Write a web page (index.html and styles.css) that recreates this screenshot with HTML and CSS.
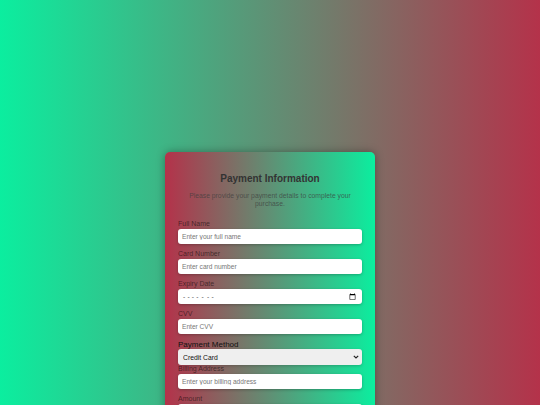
FILE: index.html
```html
<!DOCTYPE html>
<html lang="en">
<head>
<meta charset="utf-8">
<title>Payment Information</title>
<link rel="stylesheet" href="styles.css">
</head>
<body>
<main class="page">
  <form class="card">
    <h1 class="title">Payment Information</h1>
    <p class="subtitle">Please provide your payment details to complete your purchase.</p>
    <div class="group">
      <label class="label" for="name">Full Name</label>
      <input class="field" id="name" type="text" placeholder="Enter your full name">
    </div>
    <div class="group">
      <label class="label" for="card">Card Number</label>
      <input class="field" id="card" type="text" placeholder="Enter card number">
    </div>
    <div class="group">
      <label class="label" for="expiry">Expiry Date</label>
      <input class="field field-date" id="expiry" type="month">
    </div>
    <div class="group">
      <label class="label" for="cvv">CVV</label>
      <input class="field" id="cvv" type="text" placeholder="Enter CVV">
    </div>
    <label class="label-plain" for="method">Payment Method</label>
    <div class="select-wrap">
      <select class="select" id="method">
        <option>Credit Card</option>
        <option>Debit Card</option>
        <option>PayPal</option>
      </select>
      <svg class="chevron" width="6" height="4" viewBox="0 0 6 4" aria-hidden="true">
        <path d="M0.8 0.8 L3 3 L5.2 0.8" fill="none" stroke="#222" stroke-width="1.2"/>
      </svg>
    </div>
    <div class="group">
      <label class="label" for="billing">Billing Address</label>
      <input class="field" id="billing" type="text" placeholder="Enter your billing address">
    </div>
    <div class="group">
      <label class="label" for="amount">Amount</label>
      <input class="field" id="amount" type="text" placeholder="Enter amount">
    </div>
  </form>
</main>
</body>
</html>
```
FILE: styles.css
```css
html, body {
  margin: 0;
  padding: 0;
}
body {
  font-family: "Liberation Sans", Arial, sans-serif;
  background: linear-gradient(to right, #0bee9f, #b4324a);
  min-height: 405px;
  overflow: hidden;
}
.page {
  display: flex;
  justify-content: center;
  padding-top: 152px;
}
.card {
  width: 210px;
  box-sizing: border-box;
  padding: 12px 13px 20px;
  border-radius: 5px;
  background: linear-gradient(to right, #b4324a, #0bee9f);
  box-shadow: 0 0 8px rgba(0, 0, 0, 0.35);
  display: flex;
  flex-direction: column;
}
.title {
  margin: 8px 0 0;
  font-size: 10px;
  line-height: 13px;
  font-weight: bold;
  text-align: center;
  color: #333;
}
.subtitle {
  margin: 7px 0 12px;
  font-size: 6.8px;
  line-height: 8px;
  text-align: center;
  color: rgba(60, 60, 60, 0.72);
}
.group {
  display: flex;
  flex-direction: column;
  margin-bottom: 6px;
}
.label {
  font-size: 7px;
  line-height: 8px;
  margin-bottom: 1px;
  color: rgba(0, 0, 0, 0.55);
}
.label-plain {
  font-size: 8px;
  line-height: 9px;
  color: #111;
}
.field {
  box-sizing: border-box;
  display: block;
  width: 100%;
  height: 15px;
  margin: 0;
  padding: 0 4px;
  border: none;
  border-radius: 3px;
  background: #fff;
  box-shadow: 0 1px 3px rgba(0, 0, 0, 0.25);
  font-family: "Liberation Sans", Arial, sans-serif;
  font-size: 6.6px;
  color: #333;
  outline: none;
}
.field-date {
  color: #555;
  letter-spacing: 2.2px;
}
.field::placeholder {
  color: #777;
}
.select-wrap {
  position: relative;
  height: 16px;
}
.select {
  box-sizing: border-box;
  display: block;
  width: 100%;
  height: 16px;
  margin: 0;
  padding: 0 5px;
  border: none;
  border-radius: 3px;
  background-color: #efefef;
  -webkit-appearance: none;
  appearance: none;
  font-family: "Liberation Sans", Arial, sans-serif;
  font-size: 6.8px;
  color: #111;
  box-shadow: 0 1px 3px rgba(0, 0, 0, 0.2);
}
.chevron {
  position: absolute;
  right: 3px;
  top: 6px;
  pointer-events: none;
}
```
